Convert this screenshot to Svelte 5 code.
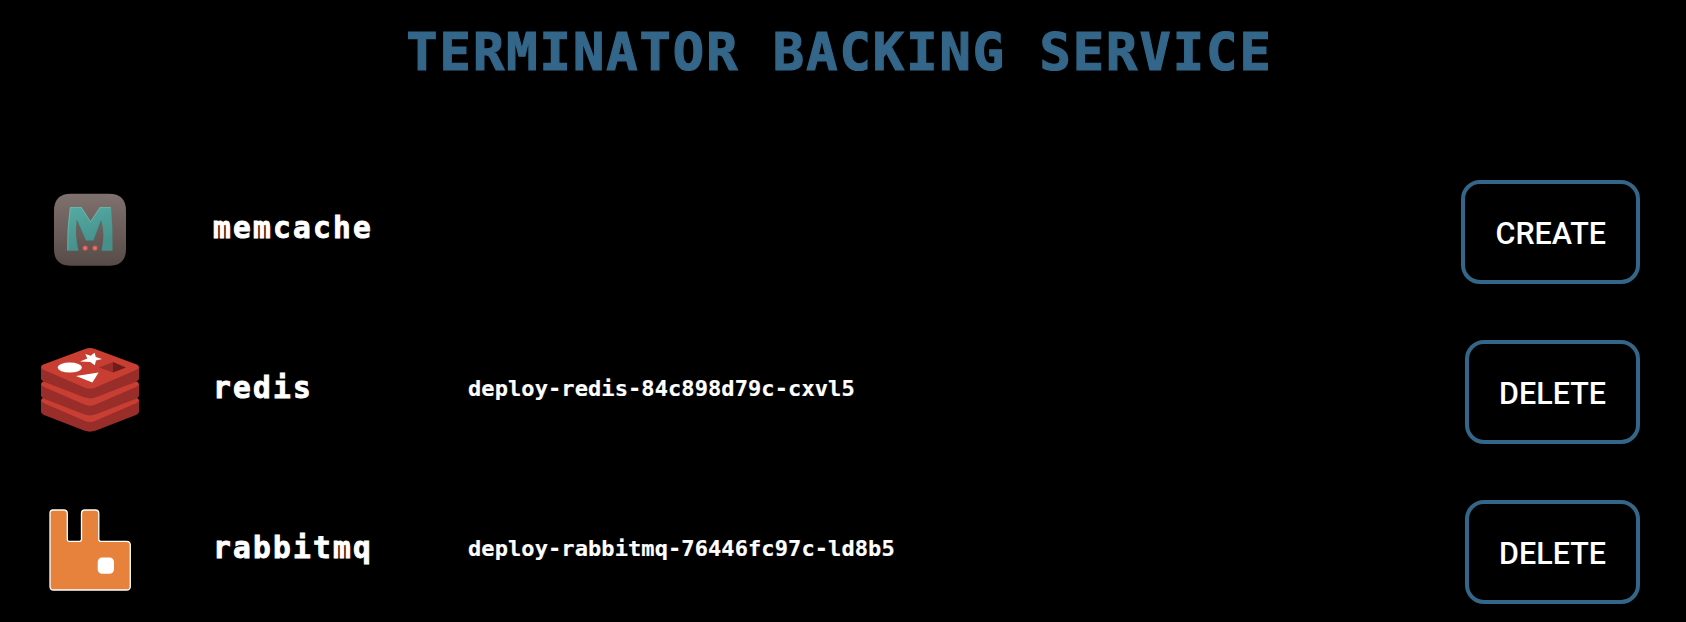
<script>
  const services = [
    { name: 'memcache', pod: '', action: 'CREATE' },
    { name: 'redis', pod: 'deploy-redis-84c898d79c-cxvl5', action: 'DELETE' },
    { name: 'rabbitmq', pod: 'deploy-rabbitmq-76446fc97c-ld8b5', action: 'DELETE' }
  ];
</script>

<main>
  <h1>TERMINATOR BACKING SERVICE</h1>
  <ul>
    {#each services as service (service.name)}
      <li>
        <svg class="logo" width="120" height="110" viewBox="0 0 120 110" aria-hidden="true">
          {#if service.name === 'memcache'}
            <defs>
              <linearGradient id="mc-tile" x1="0" y1="0" x2="0" y2="1">
                <stop offset="0" stop-color="#7f716d" />
                <stop offset="1" stop-color="#574b49" />
              </linearGradient>
              <linearGradient id="mc-letter" x1="0" y1="0" x2="0.3" y2="1">
                <stop offset="0" stop-color="#55aaa3" />
                <stop offset="1" stop-color="#468f8b" />
              </linearGradient>
              <radialGradient id="mc-dot">
                <stop offset="0" stop-color="#ee7f78" />
                <stop offset="1" stop-color="#c9544f" />
              </radialGradient>
            </defs>
            <g transform="translate(0 .8)">
              <path d="M24 33Q24 16 41 16H79Q96 16 96 33V71Q96 88 79 88H41Q24 88 24 71Z" fill="url(#mc-tile)" />
              <path d="M40 29.3H51.500L60.5 43.5L69.8 29.3H81Q83 50 82.5 73H71.5Q75.500 56 71.200 42.500L63.500 63H56L46.800 42.500Q44.500 57 48.500 73H37.300Q37 50 40 29.300Z" fill="url(#mc-letter)" />
              <path d="M37.700 72.500Q37.300 50 40.300 29.800H51.300L60.500 44L70 29.800H80.600" fill="none" stroke="#86c5bd" stroke-opacity=".7" stroke-width=".7" />
              <path d="M71.200 42.500L63.500 63H56L46.800 42.500" fill="none" stroke="#3b7773" stroke-width=".7" />
              <circle cx="55.200" cy="70.300" r="2.600" fill="url(#mc-dot)" />
              <circle cx="65" cy="70.300" r="2.600" fill="url(#mc-dot)" />
            </g>
          {:else if service.name === 'redis'}
            {#each [33.300, 17, 0] as shift (shift)}
              <g transform="translate(0 {shift})">
                <path d="M11 30V41.500Q11 43.500 14 44.800L54 60.300Q60 62.500 66 60.300L106 44.800Q109 43.500 109 41.500V30Z" fill="#982d2a" />
                <path d="M14 27.300L55 12Q60 10.200 65 12L106 27.300Q112 30 106 33L65 50.800Q60 52.800 55 50.800L14 33Q8 30 14 27.300Z" fill="#c93e32" />
              </g>
            {/each}
            <ellipse cx="39.800" cy="30.600" rx="12" ry="5" fill="#fff" />
            <path d="M55.300 17L60.600 18.700L64.600 15.800L65.800 19.900L72 22L66 23.600L64.800 28.200L60.200 25L50 24.500L57.300 21.400Z" fill="#fff" />
            <path d="M46 39L68.600 35.500L62.400 45.500Z" fill="#fff" />
            <path d="M69 30.500L83 25V35.500Z" fill="#982d2a" />
            <path d="M83 25L96 30.500L83 35.500Z" fill="#6e1d18" />
          {:else}
            <path d="M23 13H33.500Q37.300 13 37.300 16.500V42.500Q37.300 44.300 39 44.300H49.500Q51.500 44.300 51.500 42.500V16.500Q51.500 13 55 13H65.200Q68.800 13 68.800 16.500V42.500Q68.800 44.300 70.800 44.300H96.500Q100.300 44.300 100.300 48V89.500Q100.300 93 96.500 93H23.500Q20 93 20 89.500V16.500Q20 13 23 13Z" fill="#e6823c" stroke="#fff" stroke-width="1.300" />
            <rect x="67.700" y="60.400" width="16.300" height="16.300" rx="4.500" fill="#fff" />
          {/if}
        </svg>
        <span class="name">{service.name}</span>
        <span class="pod">{service.pod}</span>
        <button type="button">{service.action}</button>
      </li>
    {/each}
  </ul>
</main>

<style>
  :global(body) {
    background: #000;
  }
  main {
    box-sizing: border-box;
    height: 622px;
    overflow: hidden;
    color: #fff;
    font-family: 'DejaVu Sans Mono', monospace;
    font-weight: 700;
  }
  h1 {
    box-sizing: border-box;
    margin: 0;
    padding: 21px 7px 0 0;
    height: 180px;
    line-height: 62px;
    text-align: center;
    font-size: 52px;
    letter-spacing: 2.02px;
    color: #336688;
    -webkit-text-stroke: 1.2px #336688;
    white-space: nowrap;
  }
  ul {
    margin: 0;
    padding: 0 46px 0 30px;
    list-style: none;
    display: grid;
    gap: 56px;
  }
  li {
    display: grid;
    grid-template-columns: 183px 255px 1fr auto;
    align-items: center;
    height: 104px;
  }
  .logo {
    display: block;
    margin: -6px 0;
  }
  .name {
    font-size: 29.5px;
    line-height: 40px;
    letter-spacing: 2.240px;
    padding-bottom: 8px;
    -webkit-text-stroke: 0.9px #fff;
  }
  .pod {
    font-size: 22px;
    line-height: 30px;
    letter-spacing: 0.090px;
    padding-bottom: 6px;
    -webkit-text-stroke: 0.2px #fff;
  }
  button {
    box-sizing: border-box;
    height: 104px;
    padding: 2px 30px 0;
    border: 4px solid #336688;
    border-radius: 19px;
    background: #000;
    color: #fff;
    font: 500 30.5px Roboto, sans-serif;
  }
</style>
